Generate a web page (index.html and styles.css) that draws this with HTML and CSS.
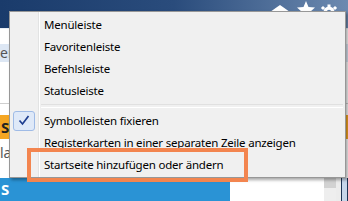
FILE: index.html
```html
<!DOCTYPE html>
<html>
<head>
<meta charset="utf-8">
<link rel="stylesheet" href="styles.css">
</head>
<body>
<div class="screen">
  <div class="toolbar">
    <svg class="tb-icons" width="80" height="12" viewBox="0 0 80 12">
      <path d="M0 12 L10 5 L20 12 Z" fill="#fff"/>
      <path d="M36 1 L38.5 7 L45 7.5 L40 12 L32 12 L27 7.5 L33.5 7 Z" fill="#fff"/>
      <g fill="#fff">
        <circle cx="59" cy="12" r="5.5"/>
        <rect x="57.5" y="4.5" width="3" height="3"/>
        <rect x="51.5" y="6.5" width="3" height="3" transform="rotate(-45 53 8)"/>
        <rect x="63.5" y="6.5" width="3" height="3" transform="rotate(45 65 8)"/>
      </g>
      <circle cx="59" cy="12" r="2.2" fill="#5f7fa8"/>
    </svg>
  </div>
  <div class="page">
    <div class="band band-white"></div>
    <div class="band band-lightblue"><span class="clip-text">er</span></div>
    <div class="band band-gap1"></div>
    <div class="band band-line"></div>
    <div class="band band-gap2"></div>
    <div class="band band-orange"><span class="clip-bold">S</span></div>
    <div class="band band-la"><span class="clip-text">la</span></div>
    <div class="band band-bottom">
      <div class="blue-bar"><span class="clip-bold white">S</span></div>
      <div class="bottom-fill"></div>
      <div class="sb-thumb"></div>
      <div class="sb-light"></div>
      <div class="sb-dark"></div>
      <div class="sb-blue"></div>
      <div class="sb-dark"></div>
    </div>
  </div>

  <div class="menu">
    <div class="item">Menüleiste</div>
    <div class="item">Favoritenleiste</div>
    <div class="item">Befehlsleiste</div>
    <div class="item">Statusleiste</div>
    <div class="sep"></div>
    <div class="item checked">
      <span class="checkbox">
        <svg width="22" height="20" viewBox="0 0 22 20"><path d="M6.5 9.5 L9.5 13 L15.5 5" fill="none" stroke="#1d3d8f" stroke-width="1.7"/></svg>
      </span>Symbolleisten fixieren</div>
    <div class="item">Registerkarten in einer separaten Zeile anzeigen</div>
    <div class="item">Startseite hinzufügen oder ändern</div>
  </div>

  <div class="highlight"></div>
</div>
</body>
</html>
```

FILE: styles.css
```css
* { box-sizing: border-box; }
html, body { margin: 0; padding: 0; }
body { width: 348px; height: 201px; overflow: hidden; background: #fff; font-family: "Noto Sans", "Segoe UI", sans-serif; }

.screen { position: relative; width: 348px; height: 201px; overflow: hidden; }

.toolbar {
  height: 28px;
  background: linear-gradient(to right, #1a3b6b 0%, #2a4c7c 50%, #6d8ab0 100%);
  position: relative;
}
.tb-icons { position: absolute; left: 270px; top: 0; }

.page { display: flex; flex-direction: column; height: 173px; }
.band { width: 100%; flex: none; }
.band-white { height: 16px; background: #fff; border-top: 1px solid #e9eef5; }
.band-lightblue { height: 18px; background: #dde7f4; line-height: 16px; }
.band-gap1 { height: 41px; background: #fff; }
.band-line { height: 1px; background: #cfcfcf; }
.band-gap2 { height: 11px; background: #fff; }
.band-orange { height: 24px; background: #f5a623; line-height: 24px; }
.band-la { height: 39px; background: #fff; line-height: 26px; }
.band-bottom { flex: 1; display: flex; }

.clip-text { font-size: 14px; color: #555; padding-left: 0; }
.clip-bold { font-size: 15px; font-weight: bold; color: #222; padding-left: 1px; }
.clip-bold.white { color: #fff; }

.blue-bar { width: 230px; background: #2a93d5; line-height: 23px; }
.bottom-fill { flex: 1; background: #fff; }
.sb-thumb { width: 12px; background: linear-gradient(to bottom, #d2d2d2 0, #d2d2d2 10px, #eeeeee 10px); }
.sb-light { width: 5px; background: #ececec; }
.sb-dark { width: 1px; background: #1e3556; }
.sb-blue { width: 5px; background: #c6d6ea; }

.menu {
  position: absolute;
  left: 9px; top: 11px;
  width: 337px; height: 167px;
  background: #f0f0f0;
  border: 1px solid #979797;
  padding: 2px 2px 1px 2px;
  box-shadow: 2px 2px 3px rgba(0,0,0,0.35);
  background-image: linear-gradient(to right, transparent 28px, #e2e3e3 28px, #e2e3e3 29px, #ffffff 29px, #ffffff 30px, transparent 30px);
}
.item {
  position: relative;
  height: 22px;
  line-height: 22px;
  padding-left: 32px;
  font-size: 11.5px;
  letter-spacing: -0.2px;
  color: #000;
  white-space: nowrap;
}
.sep {
  height: 8px;
  margin-left: 29px;
  margin-right: 0;
  padding-top: 2px;
}
.sep::before {
  content: "";
  display: block;
  height: 2px;
  border-top: 1px solid #e0e0e0;
  border-bottom: 1px solid #ffffff;
}
.checkbox {
  position: absolute;
  left: 1px; top: 1px;
  width: 22px; height: 20px;
  background: #dfe9f8;
  border: 1px solid #9fbbe6;
  border-radius: 3px;
  display: block;
}
.checkbox svg { position: absolute; left: -1px; top: -1px; }

.highlight {
  position: absolute;
  left: 27px; top: 148px;
  width: 221px; height: 34px;
  border: 4px solid #f3854f;
}
```
